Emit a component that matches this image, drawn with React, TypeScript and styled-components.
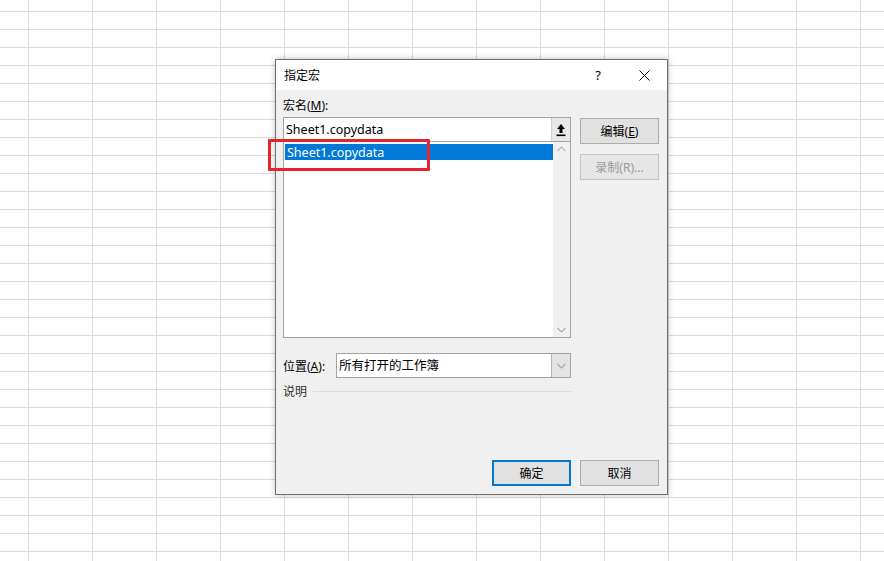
import React from "react";
import styled, { createGlobalStyle } from "styled-components";

const cjk = `"Noto Sans", "Noto Sans CJK SC", sans-serif`;

const GlobalStyle = createGlobalStyle`
  html, body {
    margin: 0;
    padding: 0;
  }
  body {
    width: 884px;
    height: 561px;
    overflow: hidden;
    font-family: ${cjk};
    background-color: #fff;
    background-image:
      linear-gradient(to right, #dadada 1px, transparent 1px),
      linear-gradient(to bottom, #dadada 1px, transparent 1px);
    background-size: 64px 18px;
    background-position: 28px 11px;
  }
`;

const Screen = styled.div`
  padding: 59px 0 0 275px;
`;

const Dialog = styled.div`
  width: 391px;
  height: 434px;
  border: 1px solid #6f6f6f;
  background: #f0f0f0;
  box-shadow: 0 0 6px rgba(0, 0, 0, 0.25);
  display: flex;
  flex-direction: column;
`;

const TitleBar = styled.div`
  height: 30px;
  background: #fff;
  display: flex;
  align-items: center;
  padding-left: 8px;
  font-size: 12px;
  color: #000;
`;

const Title = styled.span`
  flex: 1;
`;

const TitleButton = styled.div`
  width: 46px;
  height: 30px;
  display: flex;
  align-items: center;
  justify-content: center;
  font-size: 13px;
  color: #000;
`;

const Body = styled.div`
  flex: 1;
  display: flex;
  flex-direction: column;
  padding: 9px 7px 8px 7px;
`;

const Main = styled.div`
  display: flex;
  gap: 9px;
`;

const LeftCol = styled.div`
  width: 288px;
  display: flex;
  flex-direction: column;
`;

const RightCol = styled.div`
  width: 79px;
  display: flex;
  flex-direction: column;
  gap: 10px;
  padding-top: 19px;
`;

const Label = styled.div`
  font-size: 12px;
  color: #000;
  height: 18px;
  line-height: 14px;
`;

const U = styled.span`
  text-decoration: underline;
`;

const InputBox = styled.div`
  height: 23px;
  border: 1px solid #a3a3a3;
  background: #fff;
  display: flex;
  align-items: stretch;
`;

const InputText = styled.div`
  flex: 1;
  font-size: 12.5px;
  line-height: 23px;
  padding-left: 2px;
  color: #000;
`;

const SideButton = styled.div`
  width: 18px;
  border-left: 1px solid #d0d0d0;
  background: #e8e8e8;
  display: flex;
  align-items: center;
  justify-content: center;
`;

const ListBox = styled.div`
  height: 195px;
  border: 1px solid #a3a3a3;
  border-top: none;
  background: #fff;
  display: flex;
`;

const ListItems = styled.div`
  flex: 1;
  padding: 2px 0 0 1px;
  position: relative;
`;

const ListItem = styled.div<{ $selected?: boolean }>`
  height: 16px;
  line-height: 17px;
  font-size: 12.5px;
  padding-left: 2px;
  color: ${(p) => (p.$selected ? "#fff" : "#000")};
  background: ${(p) => (p.$selected ? "#0078d7" : "transparent")};
`;

const Highlight = styled.div`
  position: absolute;
  left: -16px;
  top: -3px;
  width: 156px;
  height: 26px;
  border: 3px solid #e4252b;
  border-radius: 1px;
`;

const ScrollBar = styled.div`
  width: 17px;
  background: #f0f0f0;
  display: flex;
  flex-direction: column;
  justify-content: space-between;
  align-items: center;
  padding: 4px 0;
`;

const Row = styled.div`
  display: flex;
  align-items: center;
  margin-top: 15px;
`;

const RowLabel = styled.div`
  width: 53px;
  font-size: 12px;
  color: #000;
`;

const Select = styled(InputBox)`
  flex: 1;
`;

const SelectButton = styled(SideButton)`
  background: #e3e3e3;
  border-left: 1px solid #b5b5b5;
`;

const Section = styled.div`
  display: flex;
  align-items: center;
  gap: 6px;
  margin-top: 4px;
  font-size: 12px;
  color: #303030;
`;

const Rule = styled.div`
  flex: 1;
  height: 1px;
  background: #dcdcdc;
`;

const Button = styled.div<{ $default?: boolean; $disabled?: boolean }>`
  height: ${(p) => (p.$default ? 22 : 24)}px;
  width: ${(p) => (p.$default ? 75 : 77)}px;
  border: ${(p) =>
    p.$default
      ? "2px solid #0078d7"
      : p.$disabled
      ? "1px solid #c4c4c4"
      : "1px solid #adadad"};
  background: ${(p) => (p.$disabled ? "#e6e6e6" : "#e1e1e1")};
  color: ${(p) => (p.$disabled ? "#9a9a9a" : "#000")};
  font-size: 12px;
  display: flex;
  align-items: center;
  justify-content: center;
`;

const Footer = styled.div`
  margin-top: auto;
  display: flex;
  justify-content: flex-end;
  gap: 9px;
  padding-right: 1px;
`;

const Chevron = ({ up }: { up?: boolean }) => (
  <svg width="9" height="6" viewBox="0 0 9 6">
    <path
      d={up ? "M0.5 5 L4.5 1 L8.5 5" : "M0.5 1 L4.5 5 L8.5 1"}
      fill="none"
      stroke={up ? "#b9b9b9" : "#a8a8a8"}
      strokeWidth="1.1"
    />
  </svg>
);

const Collapse = () => (
  <svg width="10" height="14" viewBox="0 0 10 14">
    <path d="M5 1 L9 6 L6.5 6 L6.5 10 L3.5 10 L3.5 6 L1 6 Z" fill="#000" />
    <rect x="0.5" y="11.5" width="9" height="1.6" fill="#000" />
  </svg>
);

const CloseIcon = () => (
  <svg width="11" height="11" viewBox="0 0 11 11">
    <path d="M0.5 0.5 L10.5 10.5 M10.5 0.5 L0.5 10.5" stroke="#000" strokeWidth="1" />
  </svg>
);

export default function App() {
  return (
    <>
      <GlobalStyle />
      <Screen>
        <Dialog>
          <TitleBar>
            <Title>指定宏</Title>
            <TitleButton>?</TitleButton>
            <TitleButton>
              <CloseIcon />
            </TitleButton>
          </TitleBar>
          <Body>
            <Main>
              <LeftCol>
                <Label>
                  宏名(<U>M</U>):
                </Label>
                <InputBox>
                  <InputText>Sheet1.copydata</InputText>
                  <SideButton>
                    <Collapse />
                  </SideButton>
                </InputBox>
                <ListBox>
                  <ListItems>
                    <ListItem $selected>Sheet1.copydata</ListItem>
                    <Highlight />
                  </ListItems>
                  <ScrollBar>
                    <Chevron up />
                    <Chevron />
                  </ScrollBar>
                </ListBox>
                <Row>
                  <RowLabel>
                    位置(<U>A</U>):
                  </RowLabel>
                  <Select>
                    <InputText>所有打开的工作簿</InputText>
                    <SelectButton>
                      <Chevron />
                    </SelectButton>
                  </Select>
                </Row>
                <Section>
                  说明
                  <Rule />
                </Section>
              </LeftCol>
              <RightCol>
                <Button>
                  编辑(<U>E</U>)
                </Button>
                <Button $disabled>录制(R)...</Button>
              </RightCol>
            </Main>
            <Footer>
              <Button $default>确定</Button>
              <Button>取消</Button>
            </Footer>
          </Body>
        </Dialog>
      </Screen>
    </>
  );
}
